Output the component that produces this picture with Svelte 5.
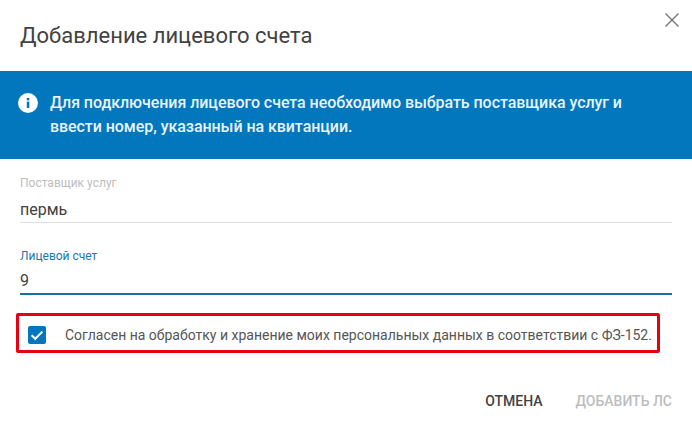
<script>
	let provider = 'пермь';
	let account = '9';
	let agreed = true;
</script>

<div class="dialog">
	<header class="head">
		<h2>Добавление лицевого счета</h2>
		<button class="close" aria-label="Закрыть">
			<svg width="14" height="14" viewBox="0 0 14 14">
				<path d="M0.5 0.5L13.5 13.5M13.5 0.5L0.5 13.5" stroke="#757575" stroke-width="1.4" fill="none" />
			</svg>
		</button>
	</header>

	<div class="banner">
		<svg class="info" width="20" height="20" viewBox="0 0 20 20">
			<circle cx="10" cy="10" r="10" fill="#fff" />
			<rect x="8.8" y="8.6" width="2.5" height="6.4" fill="#0277bd" />
			<rect x="8.8" y="5" width="2.5" height="2.4" fill="#0277bd" />
		</svg>
		<p>Для подключения лицевого счета необходимо выбрать поставщика услуг и ввести номер, указанный на квитанции.</p>
	</div>

	<div class="form">
		<div class="field">
			<span class="label">Поставщик услуг</span>
			<span class="value">{provider}</span>
		</div>
		<div class="field active">
			<span class="label">Лицевой счет</span>
			<span class="value">{account}</span>
		</div>
		<div class="agree">
			<span class="check" class:on={agreed}>
				<svg width="18" height="18" viewBox="0 0 18 18">
					<path d="M3.6 9.2L7.2 12.8L14.4 5.6" stroke="#fff" stroke-width="2" fill="none" />
				</svg>
			</span>
			<span class="agree-text">Согласен на обработку и хранение моих персональных данных в соответствии с ФЗ-152.</span>
		</div>
	</div>

	<footer class="actions">
		<button class="btn">Отмена</button>
		<button class="btn disabled">Добавить ЛС</button>
	</footer>
</div>

<style>
	:global(body) {
		margin: 0;
		background: #fff;
	}

	.dialog {
		width: 692px;
		height: 425px;
		overflow: hidden;
		font-family: Roboto, sans-serif;
		color: #424242;
		display: flex;
		flex-direction: column;
	}

	.head {
		height: 71px;
		position: relative;
		padding-left: 20px;
		display: flex;
		align-items: center;
		box-sizing: border-box;
	}

	h2 {
		margin: 0;
		font-size: 22px;
		font-weight: 400;
		line-height: 28px;
	}

	.close {
		position: absolute;
		top: 13px;
		right: 13px;
		padding: 0;
		border: 0;
		background: none;
		display: flex;
	}

	.banner {
		height: 88px;
		background: #0277bd;
		color: #e8f3fa;
		display: flex;
		align-items: flex-start;
		padding: 20px 40px 0 18px;
		gap: 12px;
		box-sizing: border-box;
	}

	.info {
		flex: none;
		margin-top: 2px;
	}

	.banner p {
		margin: 0;
		font-size: 16px;
		font-weight: 500;
		line-height: 24px;
		letter-spacing: -0.06px;
	}

	.form {
		padding: 17px 20px 0;
		display: flex;
		flex-direction: column;
	}

	.field {
		height: 46px;
		width: 652px;
		display: flex;
		flex-direction: column;
		border-bottom: 1px solid #dcdfe3;
		margin-bottom: 26px;
	}

	.field.active {
		height: 44px;
		border-bottom: 2px solid #1a6f9f;
		margin-bottom: 18px;
	}

	.label {
		font-size: 12px;
		line-height: 14px;
		color: #bdbdbd;
	}

	.active .label {
		color: #1a78ad;
	}

	.value {
		font-size: 16px;
		line-height: 20px;
		margin-top: 10px;
	}

	.active .value {
		margin-top: 8px;
	}

	.agree {
		margin-left: -4px;
		width: 644px;
		height: 40px;
		border: 3px solid #e60012;
		border-radius: 2px;
		box-sizing: border-box;
		display: flex;
		align-items: center;
		padding: 3px 0 0 9px;
		gap: 19px;
	}

	.check {
		width: 18px;
		height: 18px;
		border-radius: 2px;
		background: #bdbdbd;
		display: flex;
	}

	.check.on {
		background: #0277bd;
	}

	.agree-text {
		font-size: 14px;
		white-space: nowrap;
		color: #555;
	}

	.actions {
		margin-top: auto;
		height: 48px;
		padding: 0 20px 0 0;
		display: flex;
		justify-content: flex-end;
		align-items: center;
		gap: 33px;
		box-sizing: border-box;
	}

	.btn {
		padding: 0;
		border: 0;
		background: none;
		font: 500 14px Roboto, sans-serif;
		text-transform: uppercase;
		color: #424242;
	}

	.btn.disabled {
		color: #bdbdbd;
	}
</style>
